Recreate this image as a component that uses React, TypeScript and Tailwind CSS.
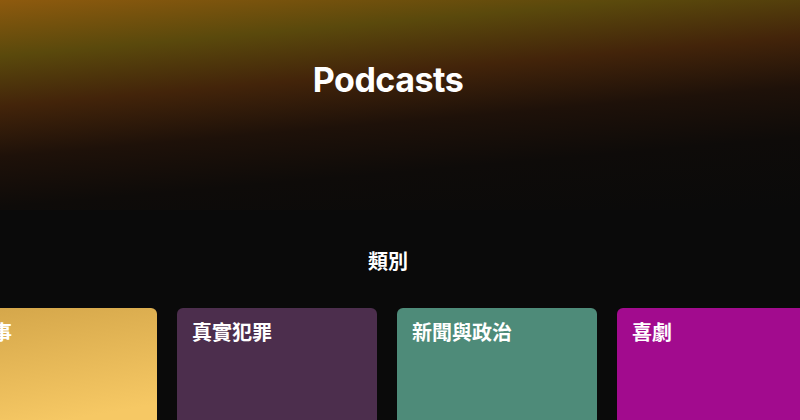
const categories = [
  { name: "故事", bg: "bg-[linear-gradient(170deg,#d3a549_0%,#f6c864_75%)]" },
  { name: "真實犯罪", bg: "bg-[#4c2e4d]" },
  { name: "新聞與政治", bg: "bg-[#4e8b79]" },
  { name: "喜劇", bg: "bg-[#a20b8e]" },
];

export default function App() {
  return (
    <div className="relative w-[800px] h-[420px] overflow-hidden bg-[#0a0a0a] font-['Inter','Noto_Sans_CJK_TC',sans-serif] text-white">
      {/* header glow */}
      <div className="absolute inset-x-0 top-0 h-[210px] bg-[linear-gradient(175deg,#8e5a0e_0%,#5a490c_20%,#43240a_38%,#1e1109_56%,#0e0b09_74%,#0a0a0a_100%)]" />

      <div className="relative flex flex-col">
        <div className="pr-[24px] pt-[58px] h-[230px] flex justify-center">
          <h1 className="text-[34px] leading-[44px] font-bold tracking-[-0.5px]">Podcasts</h1>
        </div>
        <div className="pr-[24px] h-[78px] pt-[18px] flex justify-center">
          <h2 className="text-[20px] leading-[28px] font-bold">類別</h2>
        </div>
        <div className="flex gap-[20px] -ml-[43px]">
          {categories.map((c) => (
            <div
              key={c.name}
              className={`${c.bg} w-[200px] h-[140px] shrink-0 rounded-[6px] px-[15px] pt-[11px]`}
            >
              <div className="text-[20px] leading-[28px] font-bold">{c.name}</div>
            </div>
          ))}
        </div>
      </div>
    </div>
  );
}
